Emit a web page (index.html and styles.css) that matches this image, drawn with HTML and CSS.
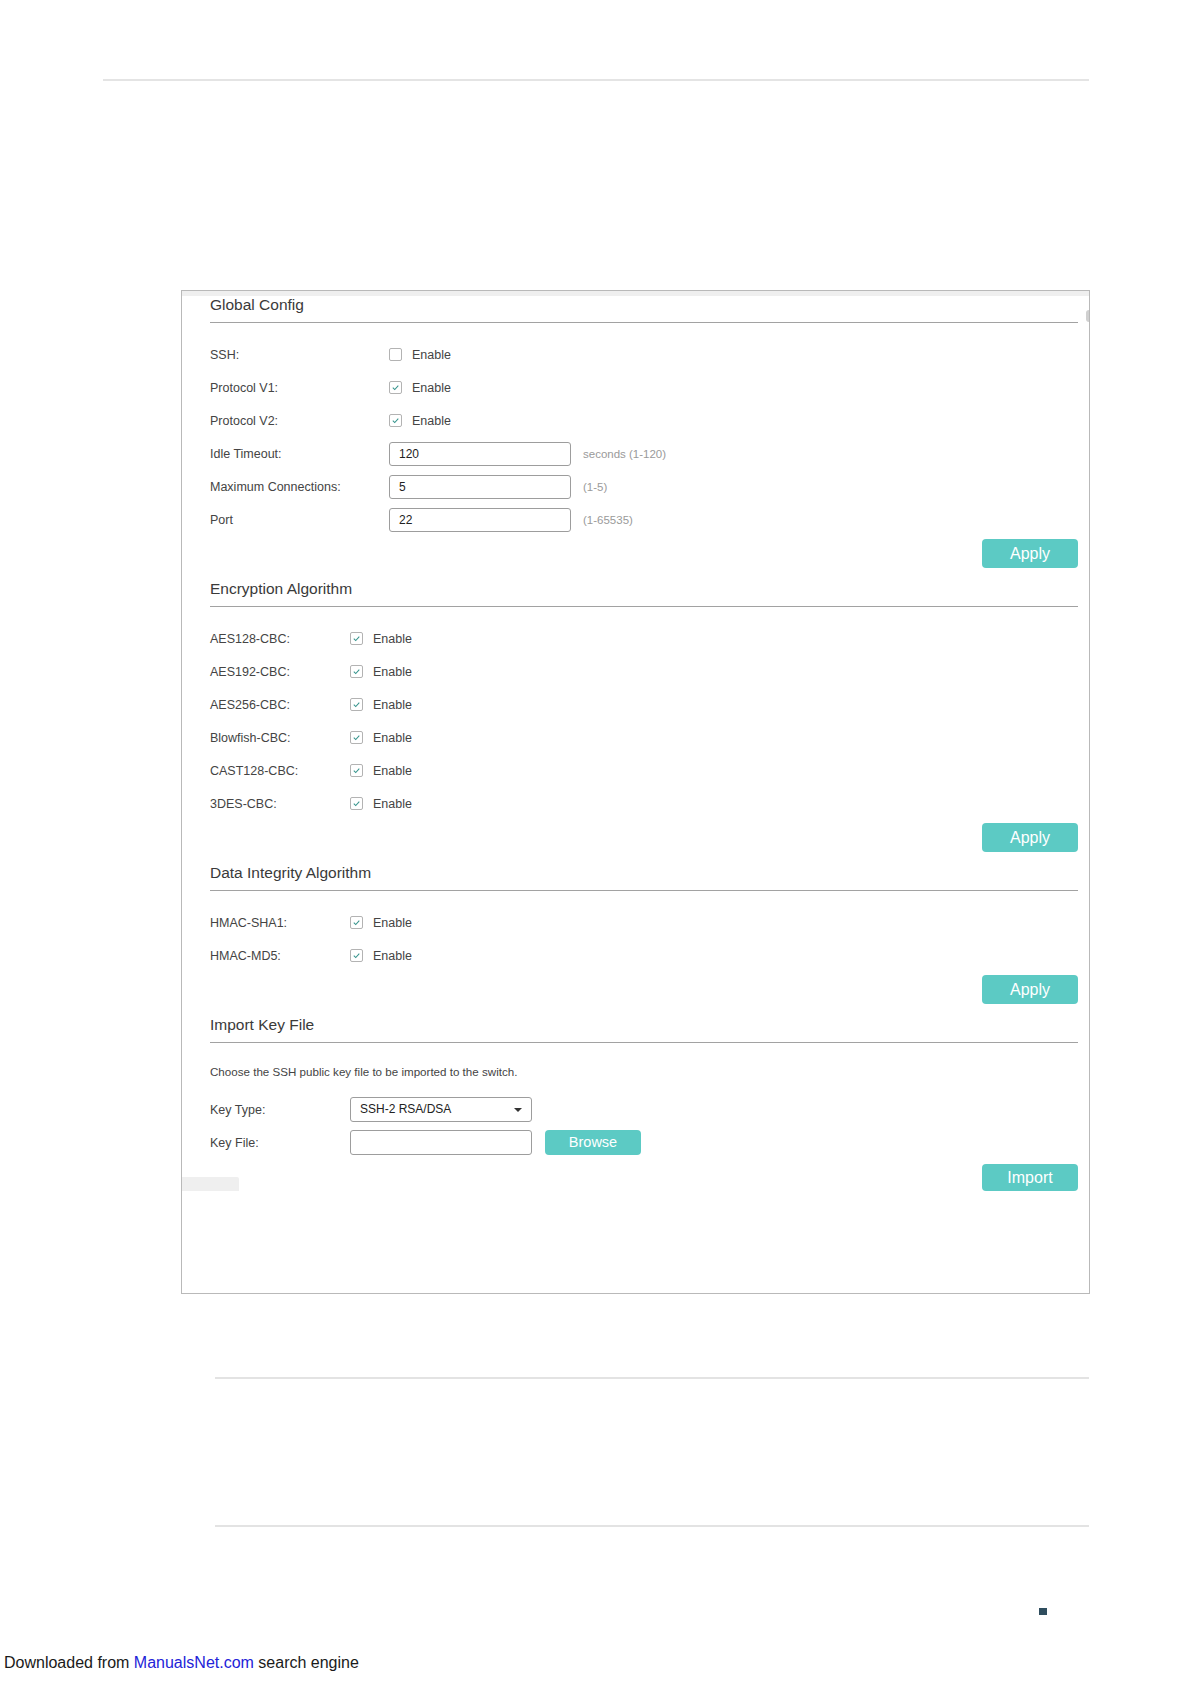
FILE: index.html
```html
<!DOCTYPE html>
<html>
<head>
<meta charset="utf-8">
<link rel="stylesheet" href="styles.css">
</head>
<body>
<div class="top-rule"></div>

<div class="panel">
  <div class="band"></div>
  <div class="bump"></div>
  <div class="panel-body">

    <h2 class="sec-head first">Global Config</h2>
    <div class="rows g1">
      <div class="row"><span class="lbl">SSH:</span><span class="cb"></span><span class="en">Enable</span></div>
      <div class="row"><span class="lbl">Protocol V1:</span><span class="cb on"><svg viewBox="0 0 13 13"><path d="M3.3 6.6 L5.6 9 L9.8 4.2"/></svg></span><span class="en">Enable</span></div>
      <div class="row"><span class="lbl">Protocol V2:</span><span class="cb on"><svg viewBox="0 0 13 13"><path d="M3.3 6.6 L5.6 9 L9.8 4.2"/></svg></span><span class="en">Enable</span></div>
      <div class="row"><span class="lbl">Idle Timeout:</span><span class="inp">120</span><span class="hint">seconds (1-120)</span></div>
      <div class="row"><span class="lbl">Maximum Connections:</span><span class="inp">5</span><span class="hint">(1-5)</span></div>
      <div class="row"><span class="lbl">Port</span><span class="inp">22</span><span class="hint">(1-65535)</span></div>
    </div>
    <div class="btn-row"><span class="btn">Apply</span></div>

    <h2 class="sec-head">Encryption Algorithm</h2>
    <div class="rows g2">
      <div class="row"><span class="lbl">AES128-CBC:</span><span class="cb on"><svg viewBox="0 0 13 13"><path d="M3.3 6.6 L5.6 9 L9.8 4.2"/></svg></span><span class="en">Enable</span></div>
      <div class="row"><span class="lbl">AES192-CBC:</span><span class="cb on"><svg viewBox="0 0 13 13"><path d="M3.3 6.6 L5.6 9 L9.8 4.2"/></svg></span><span class="en">Enable</span></div>
      <div class="row"><span class="lbl">AES256-CBC:</span><span class="cb on"><svg viewBox="0 0 13 13"><path d="M3.3 6.6 L5.6 9 L9.8 4.2"/></svg></span><span class="en">Enable</span></div>
      <div class="row"><span class="lbl">Blowfish-CBC:</span><span class="cb on"><svg viewBox="0 0 13 13"><path d="M3.3 6.6 L5.6 9 L9.8 4.2"/></svg></span><span class="en">Enable</span></div>
      <div class="row"><span class="lbl">CAST128-CBC:</span><span class="cb on"><svg viewBox="0 0 13 13"><path d="M3.3 6.6 L5.6 9 L9.8 4.2"/></svg></span><span class="en">Enable</span></div>
      <div class="row"><span class="lbl">3DES-CBC:</span><span class="cb on"><svg viewBox="0 0 13 13"><path d="M3.3 6.6 L5.6 9 L9.8 4.2"/></svg></span><span class="en">Enable</span></div>
    </div>
    <div class="btn-row"><span class="btn">Apply</span></div>

    <h2 class="sec-head">Data Integrity Algorithm</h2>
    <div class="rows g2">
      <div class="row"><span class="lbl">HMAC-SHA1:</span><span class="cb on"><svg viewBox="0 0 13 13"><path d="M3.3 6.6 L5.6 9 L9.8 4.2"/></svg></span><span class="en">Enable</span></div>
      <div class="row"><span class="lbl">HMAC-MD5:</span><span class="cb on"><svg viewBox="0 0 13 13"><path d="M3.3 6.6 L5.6 9 L9.8 4.2"/></svg></span><span class="en">Enable</span></div>
    </div>
    <div class="btn-row"><span class="btn">Apply</span></div>

    <h2 class="sec-head">Import Key File</h2>
    <p class="desc">Choose the SSH public key file to be imported to the switch.</p>
    <div class="rows g2 keys">
      <div class="row"><span class="lbl">Key Type:</span><span class="sel">SSH-2 RSA/DSA<span class="arrow"></span></span></div>
      <div class="row"><span class="lbl">Key File:</span><span class="inp"></span><span class="btn small">Browse</span></div>
    </div>
    <div class="import-row"><span class="tab"></span><span class="btn imp">Import</span></div>

  </div>
</div>

<div class="rule2"></div>
<div class="rule3"></div>
<div class="mark"></div>
<div class="footer">Downloaded from <span class="link">ManualsNet.com</span> search engine</div>
</body>
</html>
```

FILE: styles.css
```css
html, body {
  margin: 0;
  padding: 0;
  background: #ffffff;
}
body {
  width: 1191px;
  height: 1684px;
  overflow: hidden;
  font-family: "Liberation Sans", Arial, sans-serif;
}
.top-rule {
  margin: 79px 0 0 103px;
  width: 986px;
  height: 2px;
  background: #e4e4e4;
}
.panel {
  position: relative;
  box-sizing: border-box;
  margin: 209px 0 0 181px;
  width: 909px;
  height: 1004px;
  border: 1px solid #b9b9b9;
}
.band {
  height: 5px;
  background: #efefef;
}
.bump {
  position: absolute;
  right: 0;
  top: 19px;
  width: 3px;
  height: 12px;
  border-radius: 4px 0 0 4px;
  background: #d0d0d0;
}
.panel-body {
  padding: 0 11px 0 28px;
}
.sec-head {
  margin: 12px 0 0 0;
  font-size: 15.5px;
  font-weight: normal;
  line-height: 18px;
  color: #3a3a3a;
  padding-bottom: 8px;
  border-bottom: 1px solid #a2a2a2;
}
.sec-head.first {
  margin-top: 0;
}
.rows {
  margin-top: 15px;
}
.row {
  display: flex;
  align-items: center;
  height: 33px;
  font-size: 12.5px;
  color: #444;
}
.lbl {
  flex: none;
}
.g1 .lbl { width: 179px; }
.g2 .lbl { width: 140px; }
.cb {
  box-sizing: border-box;
  flex: none;
  width: 13px;
  height: 13px;
  border: 1px solid #b3b3b3;
  border-radius: 2px;
  background: #fff;
  display: flex;
}
.cb svg {
  width: 11px;
  height: 11px;
}
.cb path {
  fill: none;
  stroke: #35948c;
  stroke-width: 1.2;
}
.en {
  margin-left: 10px;
  font-size: 12.5px;
  color: #444;
}
.inp {
  box-sizing: border-box;
  flex: none;
  width: 182px;
  height: 24px;
  border: 1px solid #9d9d9d;
  border-radius: 3px;
  padding-left: 9px;
  line-height: 22px;
  font-size: 12px;
  color: #222;
}
.hint {
  margin-left: 12px;
  font-size: 11.5px;
  color: #9a9a9a;
}
.btn-row {
  display: flex;
  justify-content: flex-end;
  margin-top: 3px;
}
.btn {
  box-sizing: border-box;
  width: 96px;
  height: 29px;
  border-radius: 4px;
  background: #5ccac4;
  color: #fff;
  font-size: 16px;
  line-height: 29px;
  text-align: center;
}
.btn.small {
  height: 25px;
  line-height: 25px;
  font-size: 14.5px;
  margin-left: 13px;
}
.desc {
  margin: 20px 0 0 0;
  font-size: 11.6px;
  line-height: 18px;
  color: #444;
}
.keys {
  margin-top: 12px;
}
.sel {
  position: relative;
  box-sizing: border-box;
  flex: none;
  width: 182px;
  height: 25px;
  border: 1px solid #9d9d9d;
  border-radius: 3px;
  padding-left: 9px;
  line-height: 23px;
  font-size: 12px;
  color: #222;
}
.arrow {
  position: absolute;
  right: 9px;
  top: 10px;
  width: 0;
  height: 0;
  border-left: 4px solid transparent;
  border-right: 4px solid transparent;
  border-top: 4px solid #333;
}
.keys .inp {
  height: 25px;
}
.import-row {
  display: flex;
  justify-content: space-between;
  align-items: flex-end;
  margin-top: 5px;
}
.tab {
  width: 57px;
  height: 14px;
  margin-left: -28px;
  background: #efefef;
  border-radius: 0 2px 0 0;
}
.btn.imp {
  height: 27px;
  line-height: 27px;
}
.rule2 {
  margin: 83px 0 0 215px;
  width: 874px;
  height: 2px;
  background: #e3e3e3;
}
.rule3 {
  margin: 146px 0 0 215px;
  width: 874px;
  height: 2px;
  background: #e3e3e3;
}
.mark {
  margin: 81px 0 0 1039px;
  width: 8px;
  height: 7px;
  background: #2f4d5e;
}
.footer {
  margin-top: 38px;
  padding-left: 4px;
  font-size: 16px;
  line-height: 20px;
  color: #1a1a1a;
}
.link {
  color: #2323d8;
}
```
